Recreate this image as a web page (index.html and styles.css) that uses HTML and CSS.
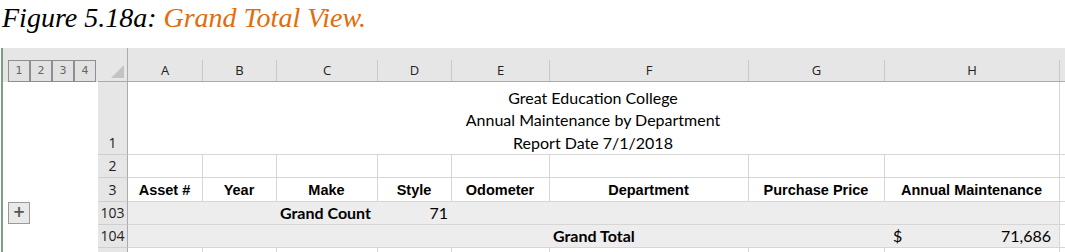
FILE: index.html
```html
<!DOCTYPE html>
<html lang="en">
<head>
    <meta charset="UTF-8">
    <title>Grand Total View</title>
    <link rel="stylesheet" href="styles.css">
</head>
<body>

    <div class="caption"><span class="fig">Figure 5.18a:</span> <span class="title">Grand Total View.</span></div>

    <div class="sheet">
        <!-- column header row -->
        <div class="outline-head">
            <span class="lvl">1</span><span class="lvl">2</span><span class="lvl">3</span><span class="lvl">4</span>
        </div>
        <div class="corner">
            <svg width="30" height="33" viewBox="0 0 30 33"><polygon points="26,17 26,30 13,30" fill="#c3c3c3"/></svg>
        </div>
        <div class="col-head"><span>A</span></div>
        <div class="col-head"><span>B</span></div>
        <div class="col-head"><span>C</span></div>
        <div class="col-head"><span>D</span></div>
        <div class="col-head"><span>E</span></div>
        <div class="col-head"><span>F</span></div>
        <div class="col-head"><span>G</span></div>
        <div class="col-head"><span>H</span></div>
        <div class="col-head rest"></div>

        <!-- row 1 -->
        <div class="outline"></div>
        <div class="row-head">1</div>
        <div class="cell report-title">
            <div>Great Education College</div>
            <div>Annual Maintenance by Department</div>
            <div>Report Date 7/1/2018</div>
        </div>
        <div class="cell rest"></div>

        <!-- row 2 -->
        <div class="outline"></div>
        <div class="row-head">2</div>
        <div class="cell"></div>
        <div class="cell"></div>
        <div class="cell"></div>
        <div class="cell"></div>
        <div class="cell"></div>
        <div class="cell"></div>
        <div class="cell"></div>
        <div class="cell"></div>
        <div class="cell rest"></div>

        <!-- row 3 -->
        <div class="outline"></div>
        <div class="row-head">3</div>
        <div class="cell th">Asset #</div>
        <div class="cell th">Year</div>
        <div class="cell th">Make</div>
        <div class="cell th">Style</div>
        <div class="cell th">Odometer</div>
        <div class="cell th">Department</div>
        <div class="cell th">Purchase Price</div>
        <div class="cell th">Annual Maintenance</div>
        <div class="cell rest"></div>

        <!-- row 103 -->
        <div class="outline"><span class="expand">+</span></div>
        <div class="row-head">103</div>
        <div class="cell total"></div>
        <div class="cell total"></div>
        <div class="cell total bold">Grand Count</div>
        <div class="cell total num">71</div>
        <div class="cell total"></div>
        <div class="cell total"></div>
        <div class="cell total"></div>
        <div class="cell total last"></div>
        <div class="cell rest"></div>

        <!-- row 104 -->
        <div class="outline"></div>
        <div class="row-head">104</div>
        <div class="cell total"></div>
        <div class="cell total"></div>
        <div class="cell total"></div>
        <div class="cell total"></div>
        <div class="cell total"></div>
        <div class="cell total bold">Grand Total</div>
        <div class="cell total"></div>
        <div class="cell total last money"><span>$</span><span>71,686</span></div>
        <div class="cell rest"></div>

        <!-- row 105 (cut off) -->
        <div class="outline"></div>
        <div class="row-head"></div>
        <div class="cell"></div>
        <div class="cell"></div>
        <div class="cell"></div>
        <div class="cell"></div>
        <div class="cell"></div>
        <div class="cell"></div>
        <div class="cell"></div>
        <div class="cell"></div>
        <div class="cell rest"></div>
    </div>

</body>
</html>
```

FILE: styles.css
```css
body {
    margin: 0;
    padding: 0;
    background: #fff;
    overflow: hidden;
}

.caption {
    height: 48px;
    padding: 3px 0 0 2px;
    font-family: "Liberation Serif", serif;
    font-style: italic;
    font-size: 28px;
    line-height: 30px;
    box-sizing: border-box;
}
.fig {
    color: #000;
}
.title {
    color: #e36c0a;
}

.sheet {
    display: grid;
    grid-template-columns: 95px 30px 75px 74px 101px 74px 98px 199px 136px 175px 1fr;
    grid-template-rows: 34px 73px 23px 24px 23px 23px 10px;
    margin-left: 1px;
    border-left: 2px solid #7a9f86;
    font-family: Lato, sans-serif;
    font-size: 16px;
    color: #000;
}

.sheet > div {
    box-sizing: border-box;
}

/* header row */
.outline-head {
    background: #e6e6e6;
    display: flex;
    align-items: flex-end;
    padding-left: 5px;
}
.lvl {
    width: 22px;
    height: 22px;
    box-sizing: border-box;
    border: 1px solid #8e8e8e;
    background: #e2e2e2;
    color: #666;
    font-family: "DejaVu Sans", sans-serif;
    font-size: 11px;
    line-height: 20px;
    text-align: center;
}
.corner {
    background: #e6e6e6;
    border-right: 1px solid #ababab;
    border-bottom: 1px solid #ababab;
}
.corner svg {
    display: block;
}
.col-head {
    background: #e6e6e6;
    border-bottom: 1px solid #ababab;
    display: flex;
    align-items: flex-end;
}
.col-head span {
    flex: 1;
    height: 21px;
    border-right: 1px solid #c9c9c9;
    text-align: center;
    font-family: "Open Sans", sans-serif;
    font-size: 13px;
    line-height: 20px;
    color: #222;
}

/* row headers and outline */
.outline {
    background: #fff;
    padding-left: 5px;
}
.expand {
    display: block;
    width: 22px;
    height: 22px;
    box-sizing: border-box;
    border: 1px solid #9a9a9a;
    background: #e9e9e9;
    color: #555;
    font-family: "DejaVu Sans", sans-serif;
    font-weight: bold;
    font-size: 15px;
    line-height: 19px;
    text-align: center;
}
.row-head {
    background: #e6e6e6;
    border-right: 1px solid #ababab;
    border-bottom: 1px solid #cfcfcf;
    display: flex;
    align-items: flex-end;
    justify-content: center;
    font-family: "Open Sans", sans-serif;
    font-size: 14px;
    line-height: 20px;
    color: #222;
    padding-bottom: 1px;
}

/* cells */
.cell {
    border-right: 1px solid #d6d6d6;
    border-bottom: 1px solid #d6d6d6;
    display: flex;
    align-items: flex-end;
    padding: 0 4px 1px 3px;
    white-space: nowrap;
    line-height: 20px;
}
.cell.rest {
    border-right: none;
}
.report-title {
    grid-column: 3 / 11;
    flex-direction: column;
    justify-content: flex-end;
    align-items: center;
    line-height: 22.5px;
    padding-bottom: 0;
}
.th {
    justify-content: center;
    font-family: "Liberation Sans", sans-serif;
    font-weight: bold;
    font-size: 14.5px;
    line-height: 18px;
    padding-bottom: 2px;
}
.total {
    background: #ededed;
    border-right: none;
}
.total.last {
    border-right: 1px solid #d6d6d6;
}
.bold {
    font-weight: bold;
}
.num {
    justify-content: flex-end;
}
.money {
    justify-content: space-between;
    padding-left: 8px;
    padding-right: 8px;
}
```
